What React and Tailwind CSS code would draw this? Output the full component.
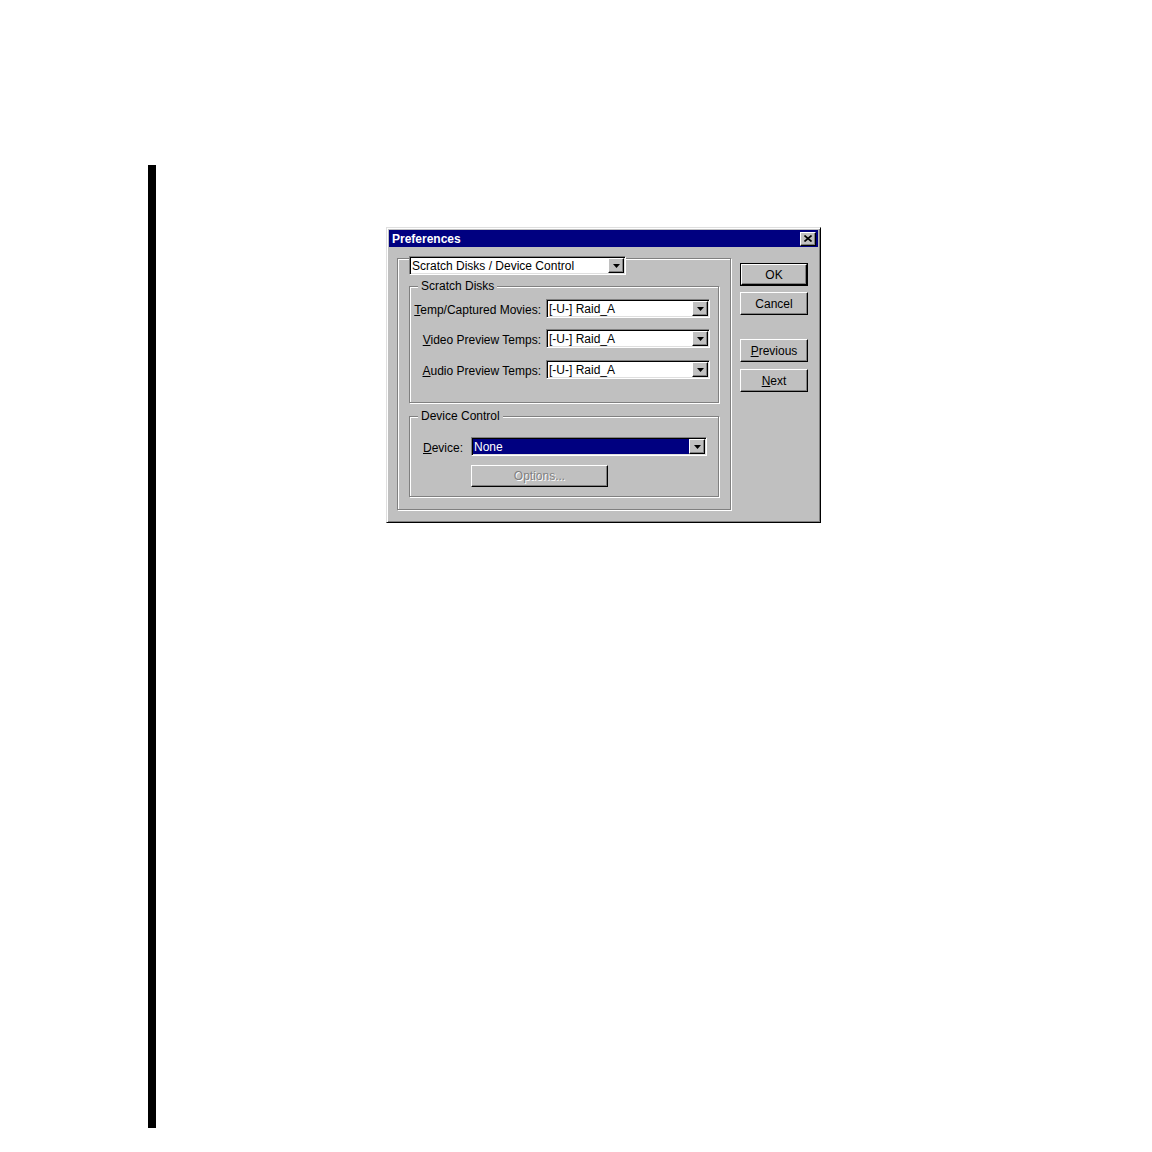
import React from "react";

const raised =
  "border border-t-white border-l-white border-r-black border-b-black shadow-[inset_-1px_-1px_0_#808080]";
const etched = "border border-[#808080] shadow-[inset_1px_1px_0_#fff,1px_1px_0_#fff]";

const ArrowButton = () => (
  <div className={`flex h-full w-[16px] items-center justify-center bg-[#c0c0c0] ${raised}`}>
    <svg width="7" height="4" viewBox="0 0 7 4">
      <polygon points="0,0 7,0 3.5,4" fill="#000" />
    </svg>
  </div>
);

const Combo = ({ value, width, selected }) => (
  <div
    className={`flex h-[19px] ${width} border border-t-[#808080] border-l-[#808080] border-r-white border-b-white`}
  >
    <div className="flex flex-1 items-stretch bg-white p-[1px] shadow-[inset_1px_1px_0_#000,inset_-1px_-1px_0_#dfdfdf]">
      <div
        className={`flex flex-1 items-center pl-[1px] ${
          selected ? "bg-[#000080] text-white" : "text-black"
        }`}
      >
        {value}
      </div>
      <ArrowButton />
    </div>
  </div>
);

const Button = ({ children, isDefault, disabled, width = "w-[68px]", height = "h-[23px]", className = "" }) => (
  <div className={`${width} ${height} ${isDefault ? "border border-black" : ""} ${className}`}>
    <div
      className={`flex h-full w-full items-center justify-center bg-[#c0c0c0] ${raised} ${
        disabled ? "text-[#808080] [text-shadow:1px_1px_0_#fff]" : "text-black"
      }`}
    >
      {children}
    </div>
  </div>
);

const Group = ({ title, className, children }) => (
  <div className={`relative ${etched} ${className}`}>
    <span className="absolute -top-[8px] left-[8px] bg-[#c0c0c0] px-[3px] leading-[14px]">{title}</span>
    {children}
  </div>
);

const Row = ({ u, rest, className = "" }) => (
  <div className={`flex items-center justify-end pr-[8px] ${className}`}>
    <span className="mr-[5px] mt-[2px] whitespace-nowrap">
      <span className="underline">{u}</span>
      {rest}
    </span>
    <Combo value="[-U-] Raid_A" width="w-[164px]" />
  </div>
);

export default function App() {
  return (
    <div className="flex h-[1152px] w-[1152px] items-start bg-white font-['Liberation_Sans',Arial,sans-serif] text-[12px] leading-[14px] text-black">
      <div className="ml-[148px] mt-[165px] h-[963px] w-[8px] bg-black" />

      <div className="ml-[230px] mt-[227px] flex h-[296px] w-[435px] flex-col border border-t-[#dfdfdf] border-l-[#dfdfdf] border-r-black border-b-black bg-[#c0c0c0] p-[2px] shadow-[inset_1px_1px_0_#fff,inset_-1px_-1px_0_#808080]">
        {/* title bar */}
        <div className="flex h-[17px] items-center justify-between bg-[#000080] pl-[3px] pr-[2px]">
          <span className="font-bold text-white">Preferences</span>
          <div className={`flex h-[14px] w-[16px] items-center justify-center bg-[#c0c0c0] ${raised}`}>
            <svg width="8" height="7" viewBox="0 0 8 7">
              <path d="M0.5 0.5L7.5 6.5M7.5 0.5L0.5 6.5" stroke="#000" strokeWidth="1.6" />
            </svg>
          </div>
        </div>

        <div className="flex flex-1 items-start">
          {/* main panel */}
          <div className={`relative ml-[8px] mt-[11px] h-[252px] w-[334px] ${etched}`}>
            <div className="absolute -top-[3px] left-[11px]">
              <Combo value="Scratch Disks / Device Control" width="w-[217px]" />
            </div>

            <div className="flex flex-col pl-[11px] pt-[27px]">
              <Group title="Scratch Disks" className="h-[117px] w-[310px]">
                <div className="flex flex-col pt-[12px]">
                  <Row u="T" rest="emp/Captured Movies:" />
                  <Row u="V" rest="ideo Preview Temps:" className="mt-[11px]" />
                  <Row u="A" rest="udio Preview Temps:" className="mt-[12px]" />
                </div>
              </Group>

              <Group title="Device Control" className="mt-[13px] h-[81px] w-[310px]">
                <div className="flex flex-col pt-[20px]">
                  <div className="flex items-center pl-[13px]">
                    <span className="mt-[2px] w-[48px]">
                      <span className="underline">D</span>evice:
                    </span>
                    <Combo value="None" width="w-[236px]" selected />
                  </div>
                  <div className="mt-[9px] pl-[61px]">
                    <Button disabled width="w-[137px]" height="h-[22px]">
                      Options...
                    </Button>
                  </div>
                </div>
              </Group>
            </div>
          </div>

          {/* buttons */}
          <div className="ml-[9px] mt-[16px] flex flex-col">
            <Button isDefault>OK</Button>
            <Button className="mt-[6px]">Cancel</Button>
            <Button className="mt-[24px]">
              <span>
                <span className="underline">P</span>revious
              </span>
            </Button>
            <Button className="mt-[7px]">
              <span>
                <span className="underline">N</span>ext
              </span>
            </Button>
          </div>
        </div>
      </div>
    </div>
  );
}
